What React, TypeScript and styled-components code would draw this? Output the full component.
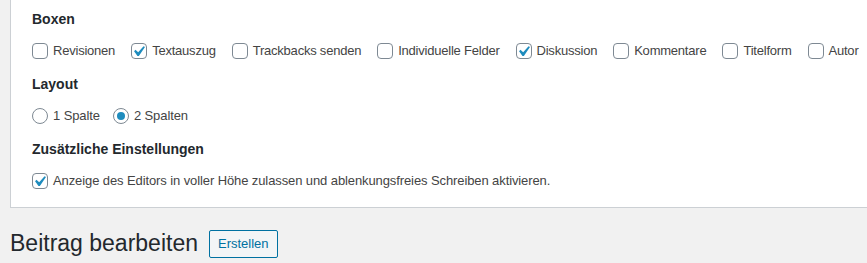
import React from 'react';
import styled, { createGlobalStyle } from 'styled-components';

const GlobalStyle = createGlobalStyle`
  body {
    margin: 0;
    background: #f1f1f1;
    font-family: "Liberation Sans", Arial, sans-serif;
    color: #444;
  }
`;

const Page = styled.div`
  width: 867px;
  height: 263px;
  overflow: hidden;
`;

const Panel = styled.div`
  margin-left: 10px;
  background: #fff;
  border-left: 1px solid #ccd0d4;
  border-bottom: 1px solid #ccd0d4;
  padding: 9px 0 11px 21px;
`;

const Fieldset = styled.fieldset`
  border: 0;
  margin: 0 0 8px;
  padding: 0;
  &:last-child {
    margin-bottom: 0;
  }
`;

const Legend = styled.div`
  font-size: 14px;
  font-weight: 600;
  line-height: 20px;
  color: #23282d;
  margin-bottom: 7px;
`;

const Row = styled.div<{ $gap: number; $spacing: number }>`
  display: flex;
  align-items: center;
  height: 30px;
  gap: ${({ $gap }) => $gap}px;
  letter-spacing: ${({ $spacing }) => $spacing}px;
  white-space: nowrap;
`;

const Label = styled.label`
  display: flex;
  align-items: center;
  gap: 5px;
  font-size: 13px;
  line-height: 30px;
  color: #444;
`;

const Box = styled.span<{ $round?: boolean }>`
  position: relative;
  flex: none;
  box-sizing: border-box;
  width: 16px;
  height: 16px;
  border: 1px solid #7e8993;
  border-radius: ${({ $round }) => ($round ? '50%' : '4px')};
  background: #fff;
`;

const Tick = styled.svg`
  position: absolute;
  top: -3px;
  left: -4px;
  width: 21px;
  height: 21px;
`;

const Dot = styled.span`
  position: absolute;
  top: 3px;
  left: 3px;
  width: 8px;
  height: 8px;
  border-radius: 50%;
  background: #1e8cbe;
`;

const Header = styled.div`
  display: flex;
  align-items: center;
  gap: 11px;
  padding: 21px 0 0 10px;
`;

const Title = styled.h1`
  margin: 0;
  font-size: 23px;
  font-weight: 400;
  line-height: 29px;
  color: #23282d;
`;

const Button = styled.button`
  box-sizing: border-box;
  font-family: inherit;
  font-size: 13px;
  line-height: 25px;
  height: 28px;
  padding: 0 8px;
  color: #0071a1;
  background: #f3f5f6;
  border: 1px solid #0071a1;
  border-radius: 2px;
`;

const Check = ({ label, checked }: { label: string; checked?: boolean }) => (
  <Label>
    <Box>
      {checked && (
        <Tick viewBox="0 0 20 20">
          <path d="M14.83 4.89l1.34.94-5.81 8.38H9.02L5.78 9.67l1.34-1.25 2.57 2.4z" fill="#1e8cbe" />
        </Tick>
      )}
    </Box>
    {label}
  </Label>
);

const Radio = ({ label, checked }: { label: string; checked?: boolean }) => (
  <Label>
    <Box $round>{checked && <Dot />}</Box>
    {label}
  </Label>
);

const boxes = [
  { label: 'Revisionen', checked: false },
  { label: 'Textauszug', checked: true },
  { label: 'Trackbacks senden', checked: false },
  { label: 'Individuelle Felder', checked: false },
  { label: 'Diskussion', checked: true },
  { label: 'Kommentare', checked: false },
  { label: 'Titelform', checked: false },
  { label: 'Autor', checked: false },
];

export default function App() {
  return (
    <Page>
      <GlobalStyle />
      <Panel>
        <Fieldset>
          <Legend>Boxen</Legend>
          <Row $gap={16} $spacing={-0.22}>
            {boxes.map((b) => (
              <Check key={b.label} label={b.label} checked={b.checked} />
            ))}
          </Row>
        </Fieldset>
        <Fieldset>
          <Legend>Layout</Legend>
          <Row $gap={13} $spacing={-0.1}>
            <Radio label="1 Spalte" />
            <Radio label="2 Spalten" checked />
          </Row>
        </Fieldset>
        <Fieldset>
          <Legend>Zusätzliche Einstellungen</Legend>
          <Row $gap={16} $spacing={-0.1}>
            <Check label="Anzeige des Editors in voller Höhe zulassen und ablenkungsfreies Schreiben aktivieren." checked />
          </Row>
        </Fieldset>
      </Panel>
      <Header>
        <Title>Beitrag bearbeiten</Title>
        <Button>Erstellen</Button>
      </Header>
    </Page>
  );
}
